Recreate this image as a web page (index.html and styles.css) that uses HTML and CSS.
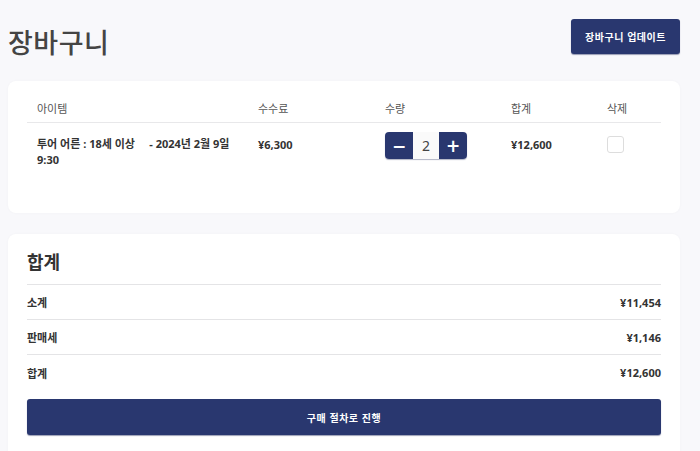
FILE: index.html
```html
<!DOCTYPE html>
<html lang="ko">
<head>
<meta charset="utf-8">
<link rel="stylesheet" href="styles.css">
</head>
<body>
<div class="page">
  <header class="top">
    <h1 class="title">장바구니</h1>
    <button class="btn btn-update">장바구니 업데이트</button>
  </header>

  <section class="card cart">
    <div class="grid head">
      <div class="cell">아이템</div>
      <div class="cell">수수료</div>
      <div class="cell">수량</div>
      <div class="cell">합계</div>
      <div class="cell">삭제</div>
    </div>
    <div class="grid row">
      <div class="cell item">투어 어른 : 18세 이상&nbsp;&nbsp;&nbsp;&nbsp;&nbsp;- 2024년 2월 9일 9:30</div>
      <div class="cell">¥6,300</div>
      <div class="cell">
        <div class="qty">
          <span class="qbtn">&minus;</span>
          <span class="qval">2</span>
          <span class="qbtn">+</span>
        </div>
      </div>
      <div class="cell">¥12,600</div>
      <div class="cell"><span class="check"></span></div>
    </div>
  </section>

  <section class="card summary">
    <h2 class="sum-title">합계</h2>
    <div class="sum-row"><span>소계</span><span>¥11,454</span></div>
    <div class="sum-row"><span>판매세</span><span>¥1,146</span></div>
    <div class="sum-row last"><span>합계</span><span>¥12,600</span></div>
    <button class="btn btn-checkout">구매 절차로 진행</button>
  </section>
</div>
</body>
</html>
```

FILE: styles.css
```css
* { box-sizing: border-box; }
html, body { margin: 0; padding: 0; }
body {
  background: #f8f8fb;
  font-family: "Noto Sans", "Noto Sans CJK KR", sans-serif;
  color: #333;
  width: 700px;
  height: 451px;
  overflow: hidden;
}
.page {
  padding: 0 20px 0 8px;
}
.top {
  display: flex;
  justify-content: space-between;
  align-items: flex-start;
  height: 81px;
}
.title {
  margin: 26px 0 0 0;
  font-size: 27px;
  line-height: 34px;
  font-weight: 500;
  color: #444;
  letter-spacing: 0.5px;
}
.btn {
  border: none;
  background: #29376f;
  color: #fff;
  font-family: "Noto Sans CJK KR", sans-serif;
  font-weight: 700;
  font-size: 10px;
  letter-spacing: 0.5px;
  border-radius: 3px;
  box-shadow: 0 1px 1px rgba(30, 40, 90, 0.45);
  padding: 0;
}
.btn-update {
  margin-top: 19px;
  width: 109px;
  height: 35px;
}
.card {
  background: #fff;
  border-radius: 8px;
  box-shadow: 0 0 3px rgba(0, 0, 40, 0.03);
}
.cart {
  height: 132px;
  padding: 12px 19px 0 19px;
}
.grid {
  display: grid;
  grid-template-columns: 221px 127px 126px 96px 63px;
}
.head {
  height: 30px;
  border-bottom: 1px solid #e8e8ea;
  align-items: center;
  font-size: 11px;
  color: #555;
}
.head .cell { padding: 0 10px; }
.row {
  padding-top: 9px;
  font-size: 11px;
  font-weight: 700;
  color: #333;
  align-items: start;
}
.row .cell {
  padding: 5px 10px 0 10px;
  line-height: 16px;
}
.row .cell.item { padding-top: 4px; }
.row .cell:nth-child(3) { padding-top: 0; }
.row .cell:nth-child(5) { padding-top: 4px; }
.qty {
  display: flex;
  width: 82px;
  height: 27px;
  border-radius: 4px;
  overflow: hidden;
  box-shadow: 0 1px 1px rgba(30, 40, 90, 0.35);
}
.qbtn {
  width: 28px;
  background: #29376f;
  color: #fff;
  display: flex;
  align-items: center;
  justify-content: center;
  font-size: 17px;
  font-weight: 700;
  font-family: "DejaVu Sans", sans-serif;
}
.qval {
  width: 26px;
  background: #fafafa;
  display: flex;
  align-items: center;
  justify-content: center;
  font-size: 14px;
  font-weight: 400;
  color: #444;
}
.check {
  display: block;
  width: 17px;
  height: 17px;
  border: 1px solid #ddd;
  border-radius: 3px;
  background: #fff;
}
.summary {
  margin-top: 21px;
  height: 240px;
  padding: 0 19px;
}
.sum-title {
  margin: 0;
  padding-top: 14px;
  height: 51px;
  font-size: 18px;
  line-height: 28px;
  font-weight: 700;
  color: #333;
  border-bottom: 1px solid #e4e4e6;
}
.sum-row {
  display: flex;
  justify-content: space-between;
  align-items: center;
  height: 35px;
  border-bottom: 1px solid #e4e4e6;
  font-size: 11px;
  font-weight: 700;
  color: #333;
}
.sum-row.last { border-bottom: none; }
.btn-checkout {
  display: block;
  margin-top: 9px;
  width: 100%;
  height: 36px;
}
```
